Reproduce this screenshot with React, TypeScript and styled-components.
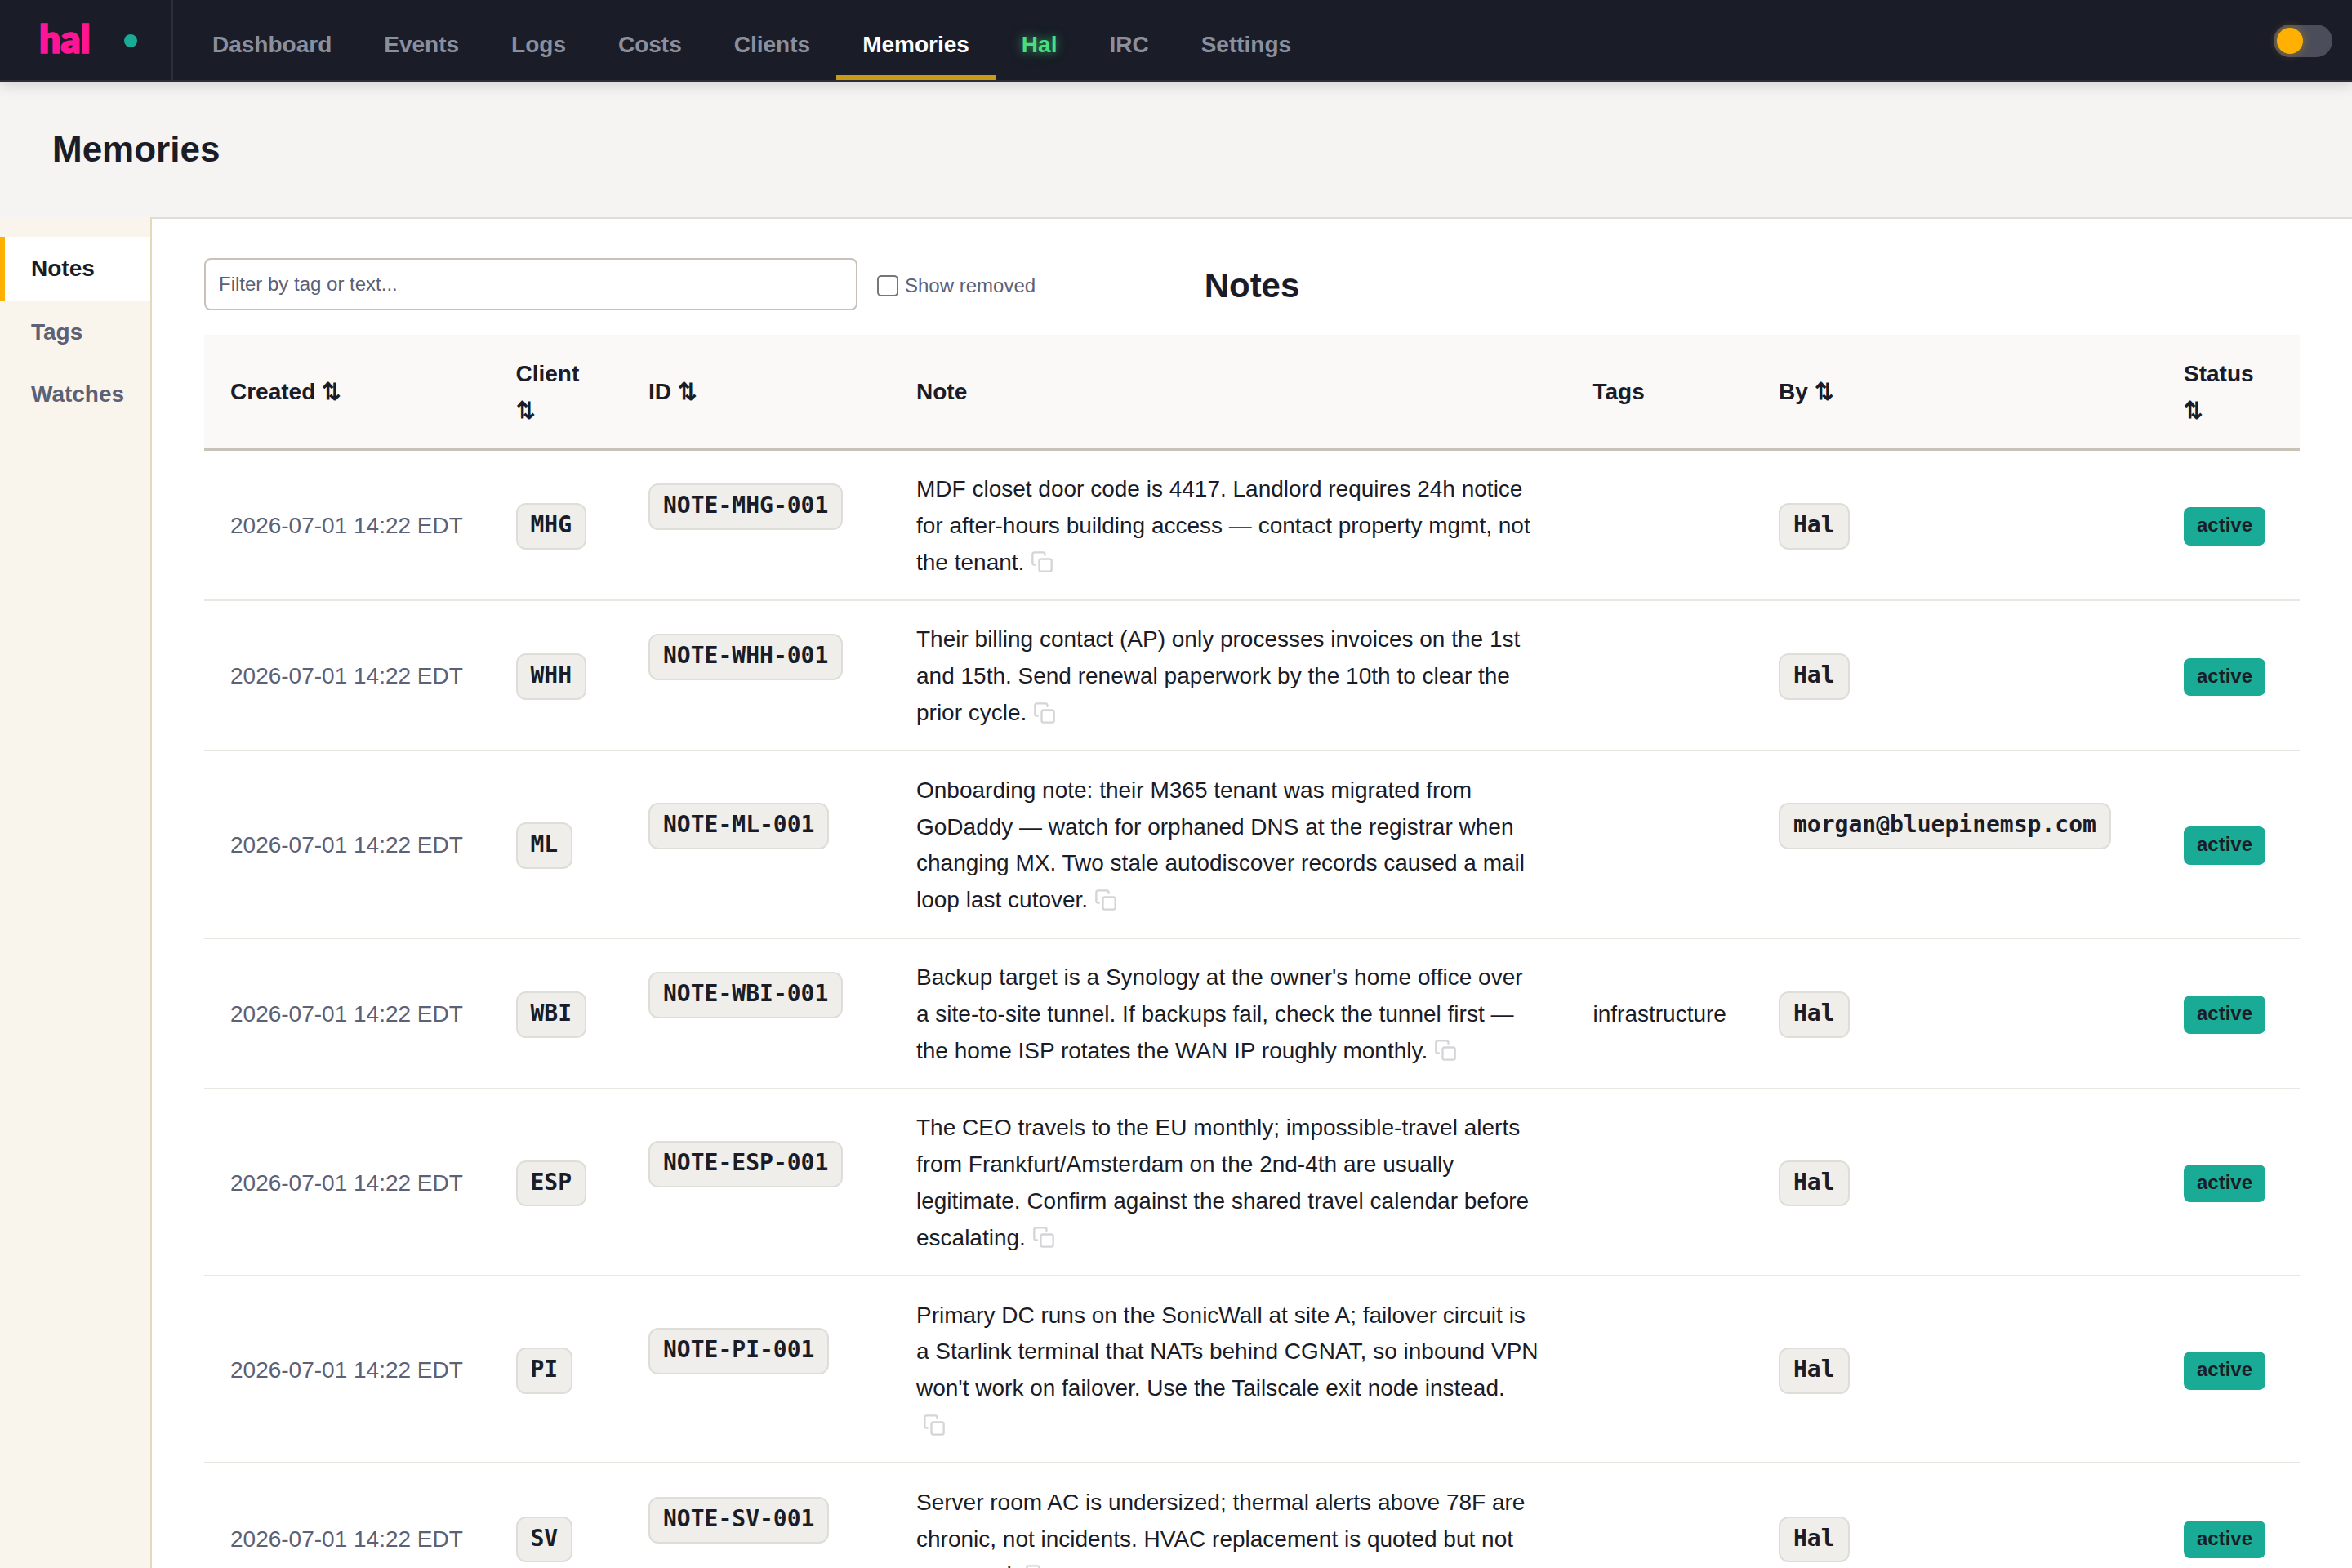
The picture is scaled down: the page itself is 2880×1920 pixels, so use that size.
import React from "react";
import styled, { createGlobalStyle, css } from "styled-components";

const navy = "#1a1c28";
const slate = "#5c6175";
const sans = '"Liberation Sans", Arial, sans-serif';

const GlobalStyle = createGlobalStyle`
  *, *::before, *::after { box-sizing: border-box; }
  body {
    margin: 0;
    background: #f5f4f2;
    color: ${navy};
    font-family: ${sans};
    font-size: 28px;
    line-height: 1.6;
  }
`;

const Page = styled.div`
  height: 1920px;
  display: flex;
  flex-direction: column;
  overflow: hidden;
`;

const TopBar = styled.header`
  flex: none;
  height: 100px;
  display: flex;
  background: ${navy};
  border-bottom: 2px solid #2d2b38;
  box-shadow: 0 4px 16px rgba(0, 0, 0, 0.15);
`;

const Brand = styled.div`
  width: 212px;
  display: flex;
  align-items: center;
  justify-content: space-between;
  padding: 2px 42px 0 48px;
  border-right: 2px solid #2d2e3a;
`;

const Logo = styled.span`
  font-family: Lato, "Open Sans", sans-serif;
  font-weight: 800;
  font-size: 46.5px;
  line-height: 48px;
  -webkit-text-stroke: 1.6px #ff1493;
  color: #ff1493;
  margin-top: -6px;
`;

const LiveDot = styled.span`
  width: 16px;
  height: 16px;
  border-radius: 50%;
  background: #1aab96;
`;

const Nav = styled.nav`
  flex: 1;
  display: flex;
  padding-left: 16px;
`;

const NavItem = styled.a<{ $active?: boolean; $glow?: boolean }>`
  display: flex;
  align-items: center;
  padding: 18px 32px 0;
  font-weight: 700;
  color: #8a8f9e;
  border-bottom: 6px solid transparent;
  ${p => p.$active && css`
    color: #fff;
    border-bottom-color: #c99a17;
  `}
  ${p => p.$glow && css`
    color: #4ade80;
    text-shadow: 0 0 12px rgba(74, 222, 128, 0.6), 0 0 24px rgba(74, 222, 128, 0.2);
  `}
`;

const Toggle = styled.div`
  align-self: center;
  width: 72px;
  height: 40px;
  margin: 2px 24px 0 0;
  padding: 4px;
  border-radius: 20px;
  background: #4b4e5a;
`;

const Knob = styled.div`
  width: 32px;
  height: 32px;
  border-radius: 50%;
  background: #ffb000;
  box-shadow: 0 0 12px rgba(255, 176, 0, 0.4);
`;

const PageHead = styled.div`
  flex: none;
  height: 166px;
  padding: 48px 64px 0;
`;

const PageTitle = styled.h1`
  margin: 0;
  font-size: 44px;
  line-height: 70px;
`;

const Body = styled.div`
  flex: 1;
  min-height: 0;
  display: flex;
`;

const Sidebar = styled.aside`
  flex: none;
  width: 186px;
  padding-top: 24px;
  background: #faf5ec;
  border-right: 2px solid #e6d8bc;
`;

const SideItem = styled.a<{ $active?: boolean }>`
  display: block;
  height: ${p => (p.$active ? 78 : 76)}px;
  padding: 17px 0 0 32px;
  border-left: 6px solid transparent;
  font-weight: 700;
  color: ${slate};
  ${p => p.$active && css`
    color: ${navy};
    background: #fff;
    border-left-color: #ffb000;
  `}
`;

const Main = styled.main`
  flex: 1;
  min-width: 0;
  padding: 48px 64px 0;
  background: #fff;
  border-top: 2px solid #deddd7;
  overflow: hidden;
`;

const Toolbar = styled.div`
  display: grid;
  grid-template-columns: 1fr auto 1fr;
  align-items: center;
  height: 64px;
  margin-bottom: 30px;
`;

const Filters = styled.div`
  display: flex;
  align-items: center;
  gap: 24px;
`;

const FilterInput = styled.input`
  width: 800px;
  height: 64px;
  padding: 0 16px;
  font: 24px ${sans};
  border: 2px solid #c8c2b8;
  border-radius: 8px;
  background: #fff;
  outline: none;
  &::placeholder { color: ${slate}; opacity: 1; }
`;

const CheckLabel = styled.label`
  display: flex;
  align-items: center;
  gap: 8px;
  padding-top: 4px;
  font-size: 24px;
  color: ${slate};
`;

const Checkbox = styled.input`
  appearance: none;
  width: 26px;
  height: 26px;
  margin: 1px 0 0;
  border: 2px solid #767676;
  border-radius: 5px;
  background: #fff;
`;

const SectionTitle = styled.h2`
  margin: 0;
  padding-top: 4px;
  font-size: 42px;
  line-height: 1.4;
`;

const Table = styled.table`
  width: 2566px;
  table-layout: fixed;
  border-collapse: separate;
  border-spacing: 0;
`;

const Col = styled.col<{ $w: number }>`
  width: ${p => p.$w}px;
`;

const Th = styled.th`
  padding: 26px 32px 22px;
  text-align: left;
  font-weight: 700;
  background: #faf9f7;
  border-bottom: 4px solid #c8c2b8;
`;

const Td = styled.td<{ $muted?: boolean; $stacked?: boolean }>`
  padding: ${p => (p.$stacked ? "24px 32px" : "25.5px 32px 22.5px")};
  vertical-align: middle;
  border-bottom: 2px solid #e8e7e2;
  color: ${p => (p.$muted ? slate : navy)};
  ${p => p.$muted && "white-space: nowrap;"}
`;

const Code = styled.code`
  display: inline-block;
  padding: 3px 16px 5px;
  font-family: "DejaVu Sans Mono", monospace;
  font-weight: 700;
  font-size: 28px;
  background: #efeeea;
  border: 2px solid #deddd7;
  border-radius: 12px;
  white-space: nowrap;
`;

const Badge = styled.span`
  display: inline-block;
  padding: 3px 16px 5px;
  font-size: 24px;
  font-weight: 700;
  line-height: 38.4px;
  background: #1aab96;
  border-radius: 8px;
  vertical-align: middle;
`;

const CopyButton = styled.span<{ $idle?: boolean }>`
  display: inline-block;
  width: 28px;
  height: 28px;
  margin: 0 8px;
  line-height: 0;
  vertical-align: -4.5px;
  color: ${navy};
  opacity: ${p => (p.$idle ? 0 : 0.18)};
`;

function Copy({ idle }: { idle?: boolean }) {
  return (
    <CopyButton $idle={idle}>
      <svg width="28" height="28" viewBox="0 0 24 24" fill="none" stroke="currentColor" strokeWidth="2" strokeLinecap="round" strokeLinejoin="round">
        <rect x="9" y="9" width="13" height="13" rx="2" ry="2" />
        <path d="M5 15H4a2 2 0 0 1-2-2V4a2 2 0 0 1 2-2h9a2 2 0 0 1 2 2v1" />
      </svg>
    </CopyButton>
  );
}

const navItems = ["Dashboard", "Events", "Logs", "Costs", "Clients", "Memories", "Hal", "IRC", "Settings"];
const sideItems = ["Notes", "Tags", "Watches"];
const columns: [string, number][] = [
  ["Created ⇅", 349.5],
  ["Client ⇅", 162.5],
  ["ID ⇅", 328],
  ["Note", 828.5],
  ["Tags", 227.5],
  ["By ⇅", 496],
  ["Status ⇅", 174],
];

interface Note {
  client: string;
  text: string;
  tags?: string;
  by?: string;
}

const notes: Note[] = [
  { client: "MHG", text: "MDF closet door code is 4417. Landlord requires 24h notice for after-hours building access — contact property mgmt, not the tenant." },
  { client: "WHH", text: "Their billing contact (AP) only processes invoices on the 1st and 15th. Send renewal paperwork by the 10th to clear the prior cycle." },
  { client: "ML", text: "Onboarding note: their M365 tenant was migrated from GoDaddy — watch for orphaned DNS at the registrar when changing MX. Two stale autodiscover records caused a mail loop last cutover.", by: "morgan@bluepinemsp.com" },
  { client: "WBI", text: "Backup target is a Synology at the owner's home office over a site-to-site tunnel. If backups fail, check the tunnel first — the home ISP rotates the WAN IP roughly monthly.", tags: "infrastructure" },
  { client: "ESP", text: "The CEO travels to the EU monthly; impossible-travel alerts from Frankfurt/Amsterdam on the 2nd-4th are usually legitimate. Confirm against the shared travel calendar before escalating." },
  { client: "PI", text: "Primary DC runs on the SonicWall at site A; failover circuit is a Starlink terminal that NATs behind CGNAT, so inbound VPN won't work on failover. Use the Tailscale exit node instead." },
  { client: "SV", text: "Server room AC is undersized; thermal alerts above 78F are chronic, not incidents. HVAC replacement is quoted but not approved." },
];

export default function App() {
  return (
    <Page>
      <GlobalStyle />
      <TopBar>
        <Brand>
          <Logo>hal</Logo>
          <LiveDot />
        </Brand>
        <Nav>
          {navItems.map(label => (
            <NavItem key={label} $active={label === "Memories"} $glow={label === "Hal"}>{label}</NavItem>
          ))}
        </Nav>
        <Toggle><Knob /></Toggle>
      </TopBar>
      <PageHead>
        <PageTitle>Memories</PageTitle>
      </PageHead>
      <Body>
        <Sidebar>
          {sideItems.map((label, i) => (
            <SideItem key={label} $active={i === 0}>{label}</SideItem>
          ))}
        </Sidebar>
        <Main>
          <Toolbar>
            <Filters>
              <FilterInput placeholder="Filter by tag or text..." />
              <CheckLabel><Checkbox type="checkbox" />Show removed</CheckLabel>
            </Filters>
            <SectionTitle>Notes</SectionTitle>
          </Toolbar>
          <Table>
            <colgroup>
              {columns.map(([name, w]) => <Col key={name} $w={w} />)}
            </colgroup>
            <thead>
              <tr>{columns.map(([name]) => <Th key={name}>{name}</Th>)}</tr>
            </thead>
            <tbody>
              {notes.map(n => (
                <tr key={n.client}>
                  <Td $muted>2026-07-01 14:22 EDT</Td>
                  <Td><Code>{n.client}</Code></Td>
                  <Td $stacked><Code>NOTE-{n.client}-001</Code><Copy idle /></Td>
                  <Td>{n.text}<Copy /></Td>
                  <Td>{n.tags}</Td>
                  <Td $stacked={!!n.by}><Code>{n.by ?? "Hal"}</Code><Copy idle /></Td>
                  <Td><Badge>active</Badge></Td>
                </tr>
              ))}
            </tbody>
          </Table>
        </Main>
      </Body>
    </Page>
  );
}
